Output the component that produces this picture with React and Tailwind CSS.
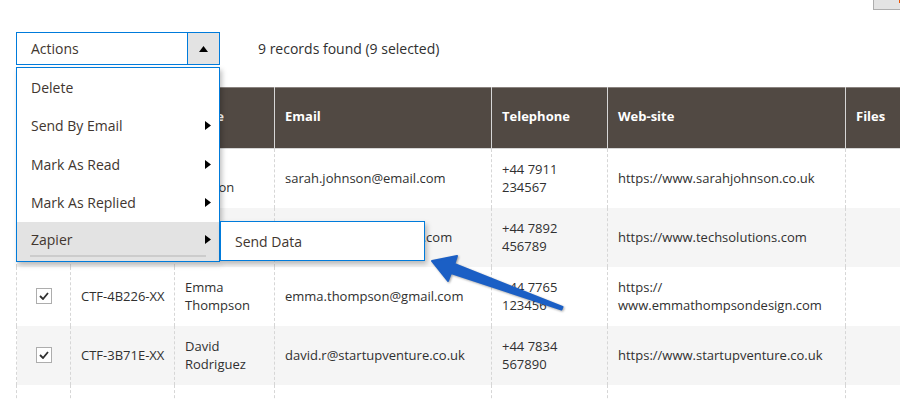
import React from "react";

const Tri = ({ dir = "right" }) =>
  dir === "right" ? (
    <svg width="6" height="9" viewBox="0 0 6 9" className="shrink-0">
      <path d="M0 0 L6 4.5 L0 9 Z" fill="#000" />
    </svg>
  ) : (
    <svg width="9" height="6" viewBox="0 0 9 6" className="shrink-0">
      <path d="M0 6 L4.5 0 L9 6 Z" fill="#000" />
    </svg>
  );

const Check = () => (
  <div className="w-[16px] h-[16px] border border-[#adadad] bg-white flex items-center justify-center">
    <svg width="10" height="8" viewBox="0 0 10 8">
      <path d="M1 4 L4 7 L9 1" fill="none" stroke="#303030" strokeWidth="1.8" />
    </svg>
  </div>
);

const rows = [
  { id: "CTF-9A1C3-XX", name: ["Sarah", "Johnson"], email: "sarah.johnson@email.com", phone: ["+44 7911", "234567"], web: ["https://www.sarahjohnson.co.uk"] },
  { id: "CTF-7D42F-XX", name: ["James", "Wilson"], email: "contact@techsolutions.com", phone: ["+44 7892", "456789"], web: ["https://www.techsolutions.com"] },
  { id: "CTF-4B226-XX", name: ["Emma", "Thompson"], email: "emma.thompson@gmail.com", phone: ["+44 7765", "123456"], web: ["https://", "www.emmathompsondesign.com"] },
  { id: "CTF-3B71E-XX", name: ["David", "Rodriguez"], email: "david.r@startupventure.co.uk", phone: ["+44 7834", "567890"], web: ["https://www.startupventure.co.uk"] },
  { id: "CTF-2E98A-XX", name: ["Olivia"], email: "olivia@greenleaf.co.uk", phone: ["+44 7700"], web: ["https://", "www.greenleafconsulting.com"] },
];

const cols = ["w-[54px]", "w-[104px]", "w-[100px]", "w-[217px]", "w-[116px]", "w-[238px]", "w-[87px]"];
const headers = ["", "ID", "Name", "Email", "Telephone", "Web-site", "Files"];

const Lines = ({ lines }) => (
  <div className="flex flex-col">
    {lines.map((l, i) => (
      <span key={i}>{l}</span>
    ))}
  </div>
);

const menuItems = ["Delete", "Send By Email", "Mark As Read", "Mark As Replied"];

export default function App() {
  return (
    <div
      className="w-[900px] h-[400px] overflow-hidden bg-white relative text-[#303030]"
      style={{ fontFamily: '"Open Sans", "Noto Sans", sans-serif' }}
    >
      {/* top bar */}
      <div className="h-[10px] flex justify-end">
        <div className="w-[30px] h-[11px] -mr-[3px] -mt-[1px] bg-[#e3e3e3] border border-[#adadad] flex justify-end">
          <div className="w-[3px] h-[3px] bg-[#eb5202]" />
        </div>
      </div>

      {/* toolbar */}
      <div className="mt-[22px] ml-[16px] flex items-center">
        <div className="relative">
          <div className="w-[204px] h-[33px] border border-[#007bdb] flex bg-white">
            <div className="flex-1 flex items-center pl-[14px] text-[14px] text-[#41362f]">Actions</div>
            <div className="w-[32px] bg-[#e3e3e3] border-l border-[#007bdb] flex items-center justify-center">
              <Tri dir="up" />
            </div>
          </div>

          {/* dropdown menu */}
          <div className="absolute left-0 top-[35px] w-[204px] z-20 border border-[#007bdb] bg-white shadow-[2px_3px_5px_rgba(0,0,0,0.25)] text-[14px] text-[#41362f]">
            {menuItems.map((m, i) => (
              <div key={m} className="h-[38.5px] flex items-center justify-between pl-[14px] pr-[8px]">
                <span>{m}</span>
                {i > 0 && <Tri />}
              </div>
            ))}
            <div className="relative h-[38.5px] bg-[#e3e3e3] flex flex-col">
              <div className="flex-1 flex items-center justify-between pl-[14px] pr-[8px] pt-[2px]">
                <span>Zapier</span>
                <Tri />
              </div>
              <div className="mx-[13px] h-[2px] bg-[#cccccc] mb-[4px]" />
              {/* submenu */}
              <div className="absolute left-[203px] -top-[1px] w-[205px] h-[40px] border border-[#007bdb] bg-white shadow-[2px_3px_5px_rgba(0,0,0,0.25)] flex items-center pl-[14px]">
                Send Data
              </div>
            </div>
          </div>
        </div>
        <div className="ml-[38px] text-[14px] text-[#303030]">9 records found (9 selected)</div>
      </div>

      {/* table */}
      <div className="mt-[22px] ml-[16px]">
        <table className="table-fixed border-collapse w-[916px] text-[13px] leading-[18px]">
          <colgroup>
            {cols.map((c, i) => (
              <col key={i} className={c} />
            ))}
          </colgroup>
          <thead>
            <tr className="h-[61px] bg-[#514943] border-t border-[#8a837f] border-b border-b-[#d6d6d6]">
              {headers.map((h, i) => (
                <th
                  key={i}
                  className={`text-left align-middle font-bold text-white px-[10px] pb-[4px] ${i > 0 ? "border-l border-l-[#d6d6d6]" : ""}`}
                >
                  {h}
                </th>
              ))}
            </tr>
          </thead>
          <tbody>
            {rows.map((r, ri) => (
              <tr key={ri} className={`h-[59px] ${ri % 2 === 1 ? "bg-[#f5f5f5]" : "bg-white"}`}>
                <td className="border-l border-[#d6d6d6] border-r border-r-[#d6d6d6] border-dashed align-middle">
                  <div className="flex justify-center">
                    <Check />
                  </div>
                </td>
                <td className="px-[10px] align-middle whitespace-nowrap border-r border-dashed border-[#d6d6d6]">{r.id}</td>
                <td className="px-[10px] align-middle border-r border-dashed border-[#d6d6d6]">
                  <Lines lines={r.name} />
                </td>
                <td className="px-[10px] align-middle whitespace-nowrap border-r border-dashed border-[#d6d6d6]">{r.email}</td>
                <td className="px-[10px] align-middle border-r border-dashed border-[#d6d6d6]">
                  <Lines lines={r.phone} />
                </td>
                <td className="px-[10px] align-middle border-r border-dashed border-[#d6d6d6]">
                  <Lines lines={r.web} />
                </td>
                <td className="px-[10px] align-middle"></td>
              </tr>
            ))}
          </tbody>
        </table>
      </div>

      {/* annotation arrow */}
      <svg className="absolute left-0 top-0 pointer-events-none z-30" width="900" height="400" viewBox="0 0 900 400">
        <path
          d="M432 261 L457 256 L454.4 264 L562.5 307 L561.5 309.5 L451 273 L448 281 Z"
          fill="#1b5fc5"
          stroke="#1b5fc5"
          strokeWidth="2"
          strokeLinejoin="round"
          style={{ filter: "drop-shadow(1px 1px 1px rgba(0,0,0,0.35))" }}
        />
      </svg>
    </div>
  );
}
